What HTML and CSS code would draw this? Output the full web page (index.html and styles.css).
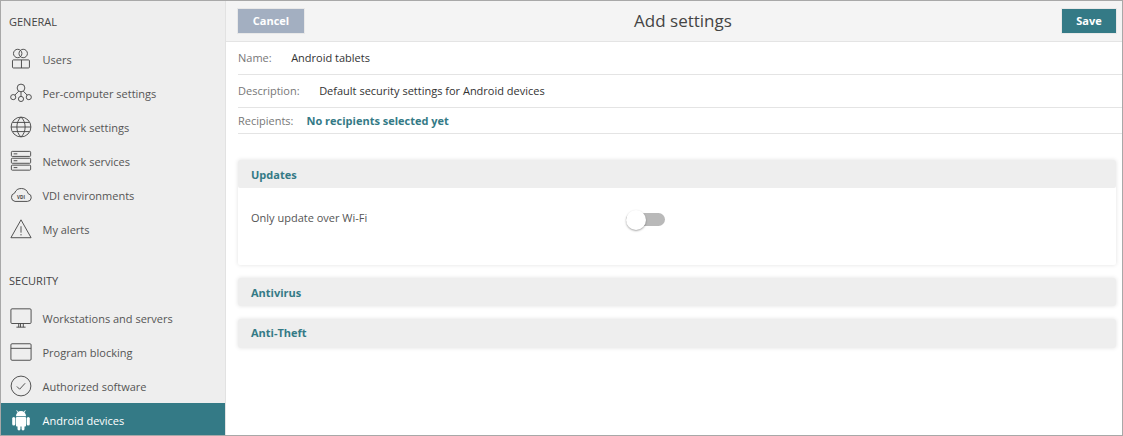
FILE: index.html
```html
<!DOCTYPE html>
<html lang="en">
<head>
<meta charset="utf-8">
<title>Add settings</title>
<link rel="stylesheet" href="styles.css">
</head>
<body>
<div class="frame">
  <aside class="sidebar">
    <h2 class="section-title">GENERAL</h2>
    <ul class="menu">
      <li class="item"><svg class="icon" viewBox="0 0 24 24"><circle cx="8.400" cy="6" r="4.600"/><circle cx="14.400" cy="6" r="4.600"/><rect x="2.700" y="13" width="18.500" height="8.800" rx="1"/><path d="M12.500 13v8.800"/></svg>Users</li>
      <li class="item"><svg class="icon" viewBox="0 0 24 24"><circle cx="12" cy="6.500" r="4.200"/><circle cx="3.500" cy="16.500" r="2.800"/><circle cx="12" cy="18.500" r="2.800"/><circle cx="20.500" cy="16.500" r="2.800"/><path d="M9.500 10 5.300 14.300M12 10.700v5M14.500 10l4.200 4.300"/></svg>Per-computer settings</li>
      <li class="item"><svg class="icon" viewBox="0 0 24 24"><circle cx="12" cy="12" r="10.800"/><path d="M1.200 12h21.600M3 7h18M3 17h18M12 1.200c-6 5-6 16.600 0 21.600M12 1.200c6 5 6 16.600 0 21.600"/></svg>Network settings</li>
      <li class="item"><svg class="icon" viewBox="0 0 24 24"><rect x="1.500" y="1.500" width="21" height="5.500" rx="1"/><rect x="1.500" y="9" width="21" height="5.500" rx="1"/><rect x="1.500" y="16.500" width="21" height="5.500" rx="1"/><path d="M4 4.200h4M4 11.700h4M4 19.200h4"/></svg>Network services</li>
      <li class="item"><svg class="icon" viewBox="0 0 24 24"><path d="M5.500 19h13.500a4.300 4.300 0 0 0 .8-8.500A7.800 7.800 0 0 0 5 10 4.600 4.600 0 0 0 5.500 19z"/><text x="12" y="16" class="vdi">VDI</text></svg>VDI environments</li>
      <li class="item"><svg class="icon" viewBox="0 0 24 24"><path d="M12 2 1 21.500h22z" stroke-linejoin="round"/><path d="M12 9v7M12 17.500v1.500"/></svg>My alerts</li>
    </ul>
    <h2 class="section-title section-title-second">SECURITY</h2>
    <ul class="menu">
      <li class="item"><svg class="icon" viewBox="0 0 24 24"><rect x="1" y="2" width="22" height="16" rx="1.200"/><path d="M9.500 18v4M14.500 18v4M11.500 18v4M7 22h10"/></svg>Workstations and servers</li>
      <li class="item"><svg class="icon" viewBox="0 0 24 24"><rect x="1" y="3" width="22" height="18" rx="1.200"/><path d="M1 8h22"/></svg>Program blocking</li>
      <li class="item"><svg class="icon" viewBox="0 0 24 24"><circle cx="12" cy="12" r="10.800"/><path d="m7.500 12.500 3 3 6-6.500"/></svg>Authorized software</li>
      <li class="item item-active"><svg class="icon icon-solid" viewBox="0 0 24 24"><path d="M6.500 7.800a5.500 5.500 0 0 1 11 0z"/><path d="M8.500 3.500 7.300 1.500M15.500 3.500l1.200-2" class="antenna"/><rect x="6.500" y="8.600" width="11" height="10.400" rx="1"/><rect x="2.400" y="8.600" width="3.400" height="9.400" rx="1.700"/><rect x="18.200" y="8.600" width="3.400" height="9.400" rx="1.700"/><rect x="8.200" y="17" width="3.200" height="6.500" rx="1.600"/><rect x="12.600" y="17" width="3.200" height="6.500" rx="1.600"/></svg>Android devices</li>
    </ul>
  </aside>
  <main class="main">
    <header class="topbar">
      <button class="btn btn-cancel" type="button">Cancel</button>
      <h1 class="title">Add settings</h1>
      <button class="btn btn-save" type="button">Save</button>
    </header>
    <section class="fields">
      <div class="field field-name"><span class="label">Name:</span><span class="value">Android tablets</span></div>
      <div class="field field-desc"><span class="label">Description:</span><span class="value">Default security settings for Android devices</span></div>
      <div class="field field-recipients"><span class="label">Recipients:</span><a class="link">No recipients selected yet</a></div>
    </section>
    <section class="panels">
      <div class="panel">
        <div class="panel-head">Updates</div>
        <div class="panel-body">
          <span class="option">Only update over Wi-Fi</span>
          <span class="switch"><span class="knob"></span></span>
        </div>
      </div>
      <div class="panel"><div class="panel-head">Antivirus</div></div>
      <div class="panel panel-tall"><div class="panel-head">Anti-Theft</div></div>
    </section>
  </main>
</div>
</body>
</html>
```
FILE: styles.css
```css
* { box-sizing: border-box; }
html, body { margin: 0; padding: 0; background: #fff; }
body { font-family: "Open Sans", "Liberation Sans", sans-serif; font-size: 11px; color: #333; }
.frame {
  width: 1123px; height: 436px; display: flex; overflow: hidden;
  border: 1px solid #a8a8a8;
}
.sidebar { width: 225px; flex: none; background: #eeeeee; border-right: 1px solid #e2e2e2; overflow: hidden; }
.section-title { margin: 0; padding: 13px 0 0 8px; height: 41px; font-size: 11px; font-weight: 400; line-height: 16px; color: #444; }
.section-title-second { height: 55px; padding-top: 27px; }
.menu { list-style: none; margin: 0; padding: 0; }
.item { height: 34px; display: flex; align-items: center; padding-left: 8.5px; color: #555; gap: 11px; font-size: 11px; }
.item-active { background: #347a86; color: #fff; }
.icon { width: 22px; height: 22px; flex: none; fill: none; stroke: #444; stroke-width: 1; }
.vdi { font-family: "Open Sans", sans-serif; font-size: 5px; font-weight: 700; fill: #444; stroke: none; text-anchor: middle; }
.icon-solid { fill: #fff; stroke: none; }
.antenna { stroke: #fff; stroke-width: 1; fill: none; }
.main { flex: 1; min-width: 0; display: flex; flex-direction: column; }
.topbar { height: 41px; flex: none; display: flex; align-items: center; justify-content: space-between; position: relative; background: #f4f4f4; border-bottom: 1px solid #e4e4e4; padding: 0 5px 1px 11px; }
.btn { height: 26px; border: 1px solid #e8e8e8; color: #fff; font-family: inherit; font-size: 11px; font-weight: 700; padding: 0; }
.btn-cancel { width: 68px; background: #a3afc1; }
.btn-save { width: 56px; background: #347a86; }
.title { margin: 0; padding-left: 18px; font-size: 17px; font-weight: 400; color: #444; position: absolute; left: 0; right: 0; text-align: center; pointer-events: none; }
.fields { margin-left: 12px; flex: none; }
.field { display: flex; align-items: center; border-bottom: 1px solid #e4e4e4; }
.field-name { height: 33px; gap: 19.500px; padding-bottom: 2px; }
.field-desc { height: 33px; gap: 19.500px; padding-bottom: 2px; }
.field-recipients { height: 26px; gap: 13px; }
.label { color: #777; }
.value { color: #333; }
.link { color: #347a86; font-weight: 700; }
.panels { padding: 26px 6px 0 12px; display: flex; flex-direction: column; gap: 13px; }
.panel { background: #fff; border-radius: 2px; box-shadow: 0 0 4px rgba(0,0,0,.12); }
.panel-head { height: 28px; background: #eeeeee; color: #347a86; font-weight: 700; line-height: 29px; padding-left: 13px; border-radius: 2px; }
.panel-tall .panel-head { height: 29px; line-height: 28px; }
.panel-body { height: 77px; position: relative; display: flex; padding: 22px 13px 0; justify-content: space-between; }
.option { color: #555; line-height: 16px; }
.switch { position: absolute; left: 388px; top: 25px; width: 39px; height: 13px; border-radius: 7px; background: #b9b9b9; }
.knob { position: absolute; left: 0; top: -3px; width: 20px; height: 20px; border-radius: 50%; background: #fff; box-shadow: 0 1px 2px rgba(0,0,0,.35); }
```
